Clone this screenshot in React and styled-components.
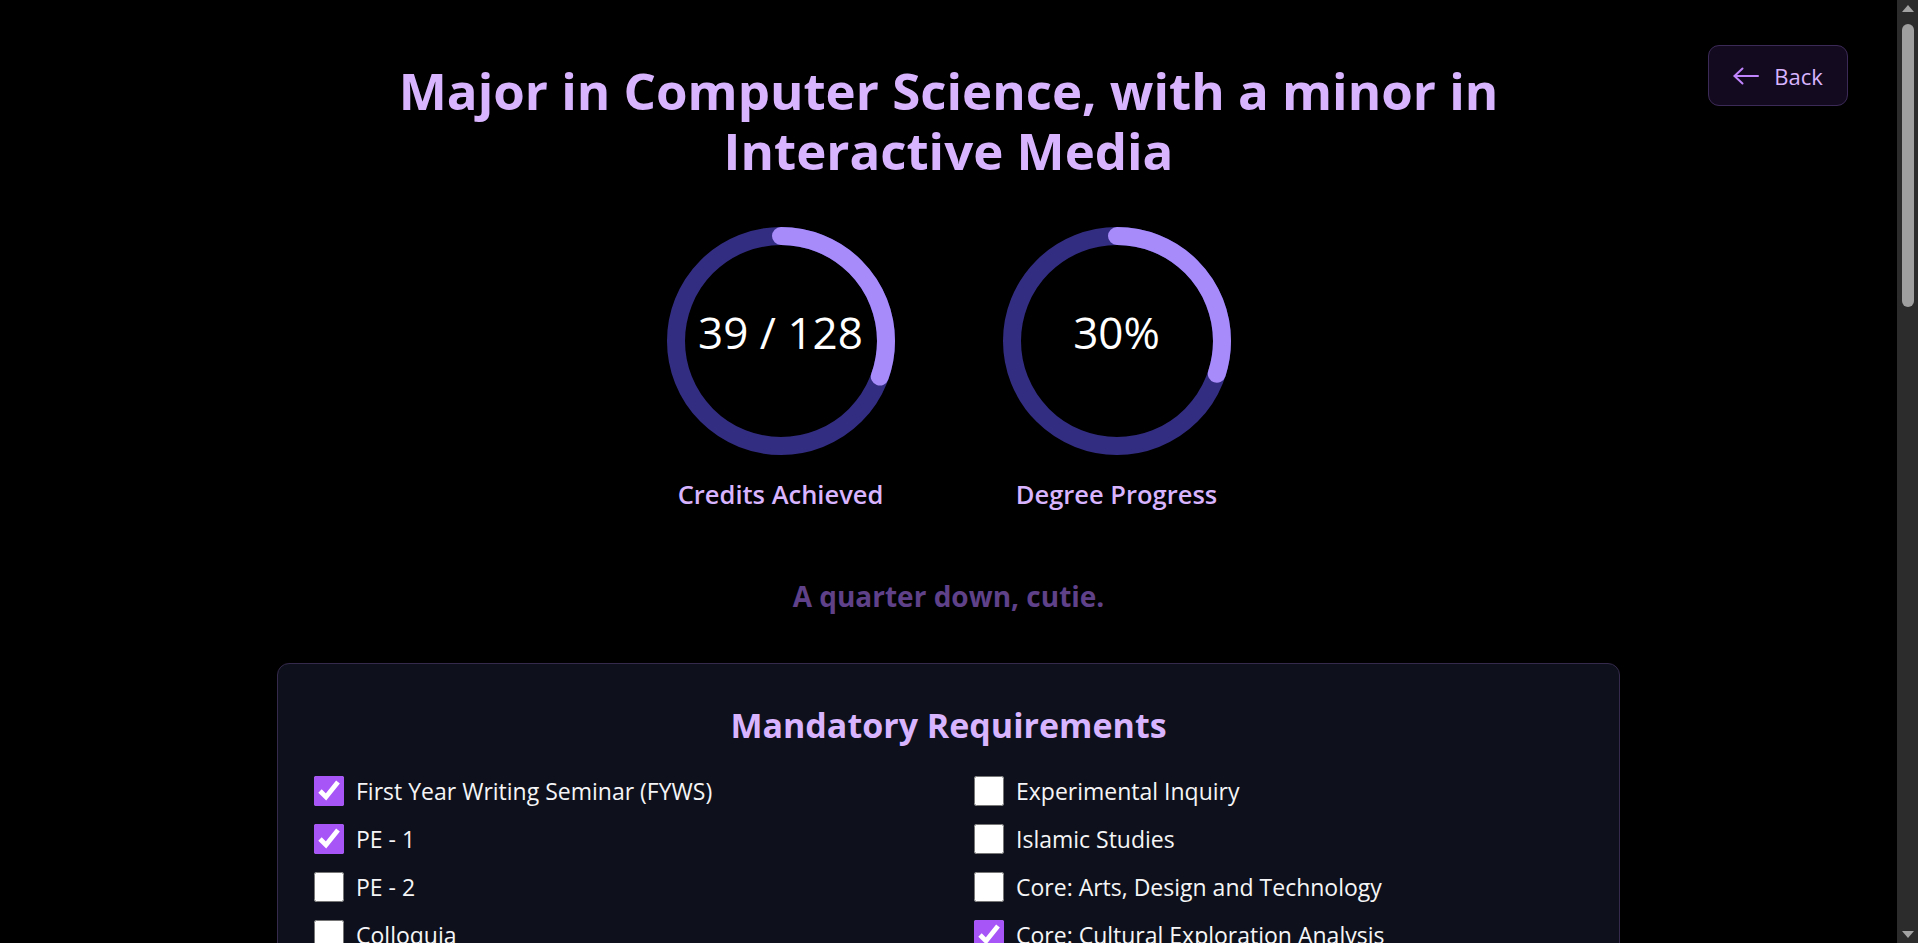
import React from 'react';
import styled, { createGlobalStyle } from 'styled-components';

const GlobalStyle = createGlobalStyle`
  html, body {
    margin: 0;
    background: #000;
    font-family: "Open Sans", "Noto Sans", sans-serif;
  }
  * { box-sizing: border-box; }
`;

const Shell = styled.div`
  display: flex;
  align-items: flex-start;
  background: #000;
`;

const Page = styled.main`
  position: relative;
  flex: 1;
  display: flex;
  flex-direction: column;
  align-items: center;
  padding: 60px 0 120px;
`;

/* window scrollbar as it shows in the screenshot */
const Rail = styled.aside`
  position: sticky;
  top: 0;
  flex: 0 0 21px;
  height: 100vh;
  display: flex;
  flex-direction: column;
  align-items: center;
  padding: 5px 0 5px 1px;
  background: #2c2c2c;
`;

const RailArrow = styled.span`
  width: 0;
  height: 0;
  border-left: 6px solid transparent;
  border-right: 6px solid transparent;
  ${(p) => (p.$down ? 'border-top: 7px solid #a3a3a3; margin-top: auto;' : 'border-bottom: 7px solid #a3a3a3;')}
`;

const Thumb = styled.span`
  width: 12px;
  height: 283px;
  margin-top: 12px;
  border-radius: 6px;
  background: #9f9f9f;
`;

const BackButton = styled.button`
  position: absolute;
  top: 45px;
  right: 49px;
  width: 140px;
  height: 61px;
  display: flex;
  align-items: center;
  justify-content: center;
  gap: 15px;
  background: #140a1f;
  border: 1px solid #3b2a57;
  border-radius: 11px;
  color: #d8b4fe;
  font-family: inherit;
  font-size: 22px;
  cursor: pointer;
`;

const Title = styled.h1`
  margin: 0;
  max-width: 1180px;
  text-align: center;
  font-size: 51px;
  line-height: 60px;
  font-weight: 700;
  color: #d8b4fe;
`;

const Rings = styled.div`
  display: flex;
  gap: 108px;
  margin-top: 47px;
`;

const Stat = styled.div`
  display: flex;
  flex-direction: column;
  align-items: center;
  gap: 22px;
`;

const RingWrap = styled.div`
  position: relative;
  width: 228px;
  height: 228px;
`;

const RingValue = styled.span`
  position: absolute;
  inset: 0;
  display: flex;
  align-items: center;
  justify-content: center;
  padding-bottom: 18px;
  color: #fff;
  font-size: 44px;
  font-weight: 400;
`;

const StatLabel = styled.span`
  color: #d8b4fe;
  font-size: 25.5px;
  font-weight: 600;
  line-height: 34px;
`;

const Quote = styled.p`
  margin: 66px 0 0;
  color: #5f4189;
  font-size: 28px;
  font-weight: 700;
`;

const Card = styled.section`
  width: 1343px;
  margin-top: ${(p) => p.$top || 48}px;
  padding: 38px 36px 44px;
  background: #0e111b;
  border: 1px solid #35294c;
  border-radius: 12px;
`;

const CardTitle = styled.h2`
  margin: 0 0 28px;
  text-align: center;
  color: #d8b4fe;
  font-size: 34px;
  line-height: 46px;
  font-weight: 700;
`;

const Grid = styled.div`
  display: grid;
  grid-template-columns: 612px 612px;
  column-gap: 48px;
  row-gap: 18px;
`;

const Item = styled.label`
  display: flex;
  align-items: center;
  gap: 12px;
  height: 30px;
  color: #f5f5f7;
  font-size: 23px;
`;

const Check = styled.input`
  width: 30px;
  height: 30px;
  margin: 0;
  accent-color: #a855f7;
`;

const Ring = ({ value, progress }) => {
  const r = 105;
  const c = 2 * Math.PI * r;
  return (
    <RingWrap>
      <svg width="228" height="228" viewBox="0 0 228 228">
        <circle cx="114" cy="114" r={r} fill="none" stroke="#332d82" strokeWidth="18" />
        <circle
          cx="114"
          cy="114"
          r={r}
          fill="none"
          stroke="#a78bfa"
          strokeWidth="18"
          strokeLinecap="round"
          strokeDasharray={c}
          strokeDashoffset={c * (1 - progress)}
          transform="rotate(-90 114 114)"
        />
      </svg>
      <RingValue>{value}</RingValue>
    </RingWrap>
  );
};

const ArrowLeft = () => (
  <svg width="26" height="18" viewBox="0 0 26 18" fill="none" stroke="#c084fc" strokeWidth="2" strokeLinecap="round" strokeLinejoin="round">
    <path d="M25 9H1.5" />
    <path d="M9.5 1.5L1.5 9l8 7.5" />
  </svg>
);

const mandatory = [
  ['First Year Writing Seminar (FYWS)', true],
  ['Experimental Inquiry', false],
  ['PE - 1', true],
  ['Islamic Studies', false],
  ['PE - 2', false],
  ['Core: Arts, Design and Technology', false],
  ['Colloquia', false],
  ['Core: Cultural Exploration Analysis', true],
  ['Core: Data and Discovery', false],
  ['Core: Structures of Thought and Society', true],
  ['Core: Science, Society and History', false],
  ['Core: Language', false],
];

const major = [
  ['Introduction to Computer Science', true],
  ['Discrete Mathematics', true],
  ['Data Structures', true],
  ['Computer Systems Organization', false],
  ['Algorithms', false],
  ['Operating Systems', false],
  ['Software Engineering', false],
  ['Computer Networks', false],
  ['Calculus with Applications', true],
  ['Linear Algebra', false],
  ['Probability and Statistics', false],
  ['Capstone Project - 1', false],
  ['Capstone Project - 2', false],
  ['CS Elective - 1', false],
  ['CS Elective - 2', false],
  ['CS Elective - 3', false],
];

const minor = [
  ['Introduction to Interactive Media', true],
  ['Communications Lab', false],
  ['Interactive Media Elective - 1', false],
  ['Interactive Media Elective - 2', false],
  ['Interactive Media Elective - 3', false],
  ['Interactive Media Elective - 4', false],
];

const Requirements = ({ title, items, top }) => (
  <Card $top={top}>
    <CardTitle>{title}</CardTitle>
    <Grid>
      {items.map(([name, done]) => (
        <Item key={name}>
          <Check type="checkbox" defaultChecked={done} />
          {name}
        </Item>
      ))}
    </Grid>
  </Card>
);

export default function App() {
  return (
    <Shell>
      <GlobalStyle />
      <Page>
        <BackButton>
          <ArrowLeft />
          Back
        </BackButton>
        <Title>Major in Computer Science, with a minor in Interactive Media</Title>
        <Rings>
          <Stat>
            <Ring value="39 / 128" progress={39 / 128} />
            <StatLabel>Credits Achieved</StatLabel>
          </Stat>
          <Stat>
            <Ring value="30%" progress={0.3} />
            <StatLabel>Degree Progress</StatLabel>
          </Stat>
        </Rings>
        <Quote>A quarter down, cutie.</Quote>
        <Requirements title="Mandatory Requirements" items={mandatory} top={48} />
        <Requirements title="Major Requirements" items={major} />
        <Requirements title="Minor Requirements" items={minor} />
      </Page>
      <Rail>
        <RailArrow />
        <Thumb />
        <RailArrow $down />
      </Rail>
    </Shell>
  );
}
